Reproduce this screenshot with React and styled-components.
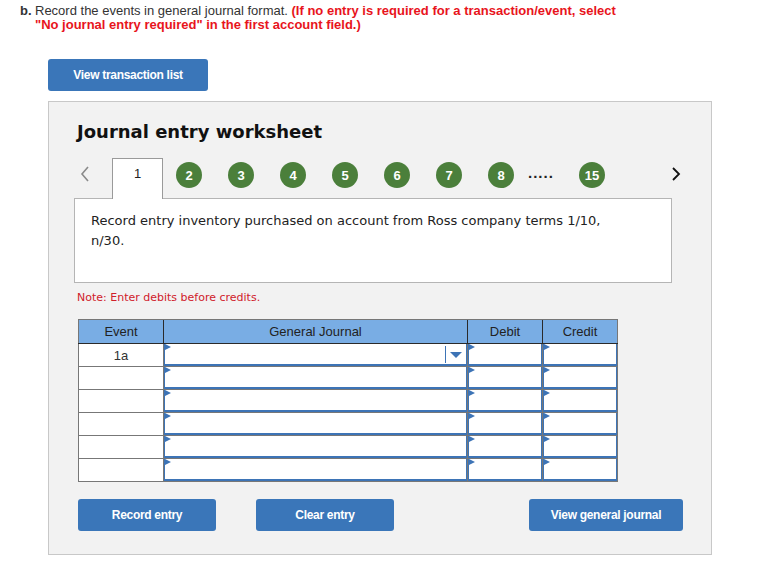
import React from 'react';
import styled, { createGlobalStyle } from 'styled-components';

const GlobalStyle = createGlobalStyle`
  body {
    margin: 0;
    background: #fff;
    font-family: "Liberation Sans", Arial, sans-serif;
  }
`;

const steps = ['2', '3', '4', '5', '6', '7', '8'];
const rows = ['1a', '', '', '', '', ''];

const ChevronLeft = () => (
  <svg width="10" height="16" viewBox="0 0 10 16">
    <path d="M8 1 L2 8 L8 15" fill="none" stroke="#8a8a8a" strokeWidth="1.6" />
  </svg>
);

const ChevronRight = () => (
  <svg width="10" height="16" viewBox="0 0 10 16">
    <path d="M2 2 L8 8 L2 14" fill="none" stroke="#111" strokeWidth="1.8" />
  </svg>
);

const App = () => {
  return (
    <Page>
      <GlobalStyle />
      <Instruction>
        <Label>b.</Label>
        <Body>
          <Line>
            <span>Record the events in general journal format. </span>
            <Warn>(If no entry is required for a transaction/event, select</Warn>
          </Line>
          <Line>
            <Warn>"No journal entry required" in the first account field.)</Warn>
          </Line>
        </Body>
      </Instruction>
      <BlueButton $width={160} $left={48}>View transaction list</BlueButton>
      <Panel>
        <Title>Journal entry worksheet</Title>
        <NavRow>
          <ArrowSlot $w={35}><ChevronLeft /></ArrowSlot>
          <Tab>1</Tab>
          {steps.map((s) => (
            <StepSlot key={s}><Circle>{s}</Circle></StepSlot>
          ))}
          <Dots>.....</Dots>
          <Circle>15</Circle>
          <ArrowSlot $w={76} $end><ChevronRight /></ArrowSlot>
        </NavRow>
        <Prompt>
          <PromptText>Record entry inventory purchased on account from Ross company terms 1/10, n/30.</PromptText>
        </Prompt>
        <Note>Note: Enter debits before credits.</Note>
        <Table>
          <colgroup>
            <col style={{ width: 85 }} />
            <col style={{ width: 304 }} />
            <col style={{ width: 75 }} />
            <col style={{ width: 75 }} />
          </colgroup>
          <thead>
            <tr>
              <Th>Event</Th>
              <Th>General Journal</Th>
              <Th>Debit</Th>
              <Th>Credit</Th>
            </tr>
          </thead>
          <tbody>
            {rows.map((ev, i) => (
              <tr key={i}>
                <EventCell>{ev}</EventCell>
                <InputCell>
                  <InputBox>
                    {i === 0 && (
                      <Select>
                        <svg width="12" height="6" viewBox="0 0 12 6">
                          <path d="M0 0 L12 0 L6 6 Z" fill="#3d74b6" />
                        </svg>
                      </Select>
                    )}
                  </InputBox>
                </InputCell>
                <InputCell><InputBox /></InputCell>
                <InputCell><InputBox /></InputCell>
              </tr>
            ))}
          </tbody>
        </Table>
        <ButtonRow>
          <ButtonGroup>
            <BlueButton $width={138}>Record entry</BlueButton>
            <BlueButton $width={138}>Clear entry</BlueButton>
          </ButtonGroup>
          <BlueButton $width={154}>View general journal</BlueButton>
        </ButtonRow>
      </Panel>
    </Page>
  );
};

export default App;

const Page = styled.div`
  width: 767px;
  padding-top: 4px;
`;

const Instruction = styled.div`
  display: flex;
  padding-left: 20px;
  font-size: 13px;
  line-height: 14px;
  color: #333;
`;

const Label = styled.div`
  font-weight: bold;
  width: 15px;
  flex: none;
`;

const Body = styled.div`
  flex: 1;
`;

const Line = styled.div`
  white-space: nowrap;
`;

const Warn = styled.span`
  color: #e8141c;
  font-weight: bold;
`;

const BlueButton = styled.button`
  display: block;
  width: ${(p) => p.$width}px;
  height: 32px;
  margin-left: ${(p) => p.$left || 0}px;
  margin-top: ${(p) => (p.$left ? 27 : 0)}px;
  background: #3a76b9;
  border: none;
  border-radius: 3px;
  color: #fff;
  font-family: "Liberation Sans", Arial, sans-serif;
  font-size: 12px;
  font-weight: bold;
  letter-spacing: -0.3px;
  padding: 0;
`;

const Panel = styled.div`
  margin: 10px 0 0 48px;
  width: 662px;
  height: 452px;
  background: #f2f2f2;
  border: 1px solid #c8c8c8;
  font-family: "DejaVu Sans", Verdana, sans-serif;
`;

const Title = styled.h2`
  margin: 19px 0 0 28px;
  font-size: 18px;
  line-height: 22px;
  font-weight: bold;
  color: #111;
`;

const NavRow = styled.div`
  display: flex;
  align-items: flex-start;
  margin: 15px 0 0 28px;
  height: 41px;
  position: relative;
  z-index: 1;
`;

const ArrowSlot = styled.div`
  width: ${(p) => p.$w}px;
  height: 30px;
  display: flex;
  align-items: center;
  justify-content: ${(p) => (p.$end ? 'flex-end' : 'flex-start')};
  padding-left: ${(p) => (p.$end ? 0 : 3)}px;
  box-sizing: border-box;
  margin-top: 1px;
`;

const Tab = styled.div`
  width: 51px;
  height: 41px;
  box-sizing: border-box;
  background: #fff;
  border: 1px solid #9a9a9a;
  border-bottom: none;
  text-align: center;
  padding-top: 7px;
  font-family: "Liberation Sans", Arial, sans-serif;
  font-size: 13px;
  color: #222;
`;

const StepSlot = styled.div`
  width: 52px;
  display: flex;
  justify-content: center;
`;

const Circle = styled.div`
  width: 26px;
  height: 26px;
  margin-top: 4px;
  border-radius: 50%;
  background: #4b7f3b;
  color: #fff;
  display: flex;
  align-items: center;
  justify-content: center;
  font-family: "Liberation Sans", Arial, sans-serif;
  font-size: 13px;
  font-weight: 600;
`;

const Dots = styled.div`
  width: 52px;
  padding-left: 1px;
  box-sizing: border-box;
  margin-top: 6px;
  font-family: "Liberation Sans", Arial, sans-serif;
  font-size: 15px;
  font-weight: bold;
  letter-spacing: 1px;
  color: #222;
`;

const Prompt = styled.div`
  margin: -1px 0 0 25px;
  width: 598px;
  height: 85px;
  box-sizing: border-box;
  background: #fff;
  border: 1px solid #b5b5b5;
  padding: 12px 16px;
`;

const PromptText = styled.p`
  margin: 0;
  max-width: 530px;
  font-size: 13px;
  line-height: 20px;
  color: #222;
`;

const Note = styled.div`
  margin: 8px 0 0 28px;
  font-size: 11px;
  line-height: 14px;
  color: #d0202a;
`;

const Table = styled.table`
  margin: 14px 0 0 29px;
  width: 539px;
  table-layout: fixed;
  border-collapse: collapse;
  border: 1px solid #777;
`;

const Th = styled.th`
  height: 23px;
  padding: 0;
  background: #79ade4;
  border-left: 1px solid #2a2a2a;
  border-bottom: 1px solid #2a2a2a;
  border-top: 1px solid #777;
  font-family: "Liberation Sans", Arial, sans-serif;
  font-size: 13px;
  font-weight: normal;
  color: #222;
  &:first-child {
    border-left: 1px solid #777;
  }
`;

const EventCell = styled.td`
  height: 22px;
  padding: 0;
  background: #fff;
  border: 1px solid #777;
  text-align: center;
  font-family: "Liberation Sans", Arial, sans-serif;
  font-size: 13px;
  color: #333;
`;

const InputCell = styled.td`
  height: 22px;
  padding: 0;
  background: #fff;
  border: 1px solid #777;
`;

const InputBox = styled.div`
  position: relative;
  height: 22px;
  box-sizing: border-box;
  border-left: 1px solid #3d74b6;
  border-right: 1px solid #3d74b6;
  border-bottom: 2px solid #3d74b6;
  &::before {
    content: '';
    position: absolute;
    left: 0;
    top: 0;
    border-top: 3px solid transparent;
    border-bottom: 3px solid transparent;
    border-left: 6px solid #3d74b6;
  }
`;

const Select = styled.div`
  position: absolute;
  right: 0;
  top: 2px;
  width: 20px;
  height: 17px;
  border-left: 1px solid #3d74b6;
  display: flex;
  align-items: center;
  justify-content: center;
`;

const ButtonRow = styled.div`
  display: flex;
  justify-content: space-between;
  margin: 17px 28px 0 29px;
`;

const ButtonGroup = styled.div`
  display: flex;
  gap: 40px;
`;
